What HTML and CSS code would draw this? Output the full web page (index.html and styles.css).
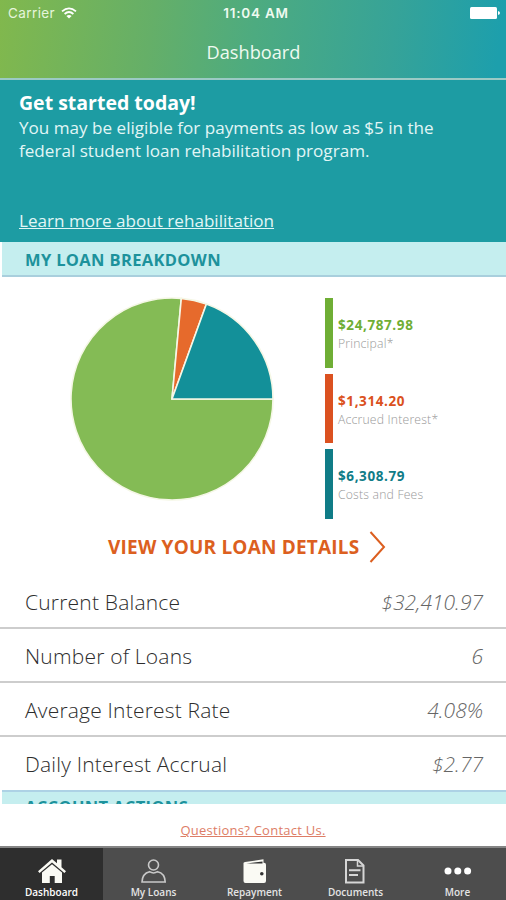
FILE: index.html
```html
<!DOCTYPE html>
<html lang="en">
<head>
<meta charset="UTF-8">
<title>Dashboard</title>
<link rel="stylesheet" href="styles.css">
</head>
<body>
<div class="app">
    <header class="header">
        <div class="status">
            <div class="carrier">
                <span>Carrier</span>
                <svg width="16" height="12" viewBox="0 0 16 12" fill="none" stroke="#fff" stroke-width="1.8">
                    <path d="M1 4.4Q8 -1.6 15 4.4"/>
                    <path d="M3.6 7Q8 3.1 12.4 7"/>
                    <path d="M8 11.6L5.4 8.9Q8 6.9 10.6 8.9Z" fill="#fff" stroke="none"/>
                </svg>
            </div>
            <div class="clock">11:04 AM</div>
            <svg class="battery" width="30" height="12" viewBox="0 0 30 12" fill="#fff">
                <rect width="27" height="12" rx="1.5"/>
                <path d="M28 4Q30 4.5 30 6T28 8Z"/>
            </svg>
        </div>
        <h1 class="title">Dashboard</h1>
    </header>

    <section class="promo">
        <h2>Get started today!</h2>
        <p>You may be eligible for payments as low as $5 in the<br>federal student loan rehabilitation program.</p>
        <a class="learn">Learn more about rehabilitation</a>
    </section>

    <main class="content">
        <h3 class="section_title">MY LOAN BREAKDOWN</h3>
        <div class="breakdown">
            <svg class="pie" width="204" height="204" viewBox="-102 -102 204 204" stroke="#f5f7e6" stroke-width="1.6">
                <path fill="#84bb55" d="M0 0H101A101 101 0 1 1 9.3 -100.6Z"/>
                <path fill="#e66a2c" d="M0 0L9.3 -100.6A101 101 0 0 1 34.4 -95Z"/>
                <path fill="#139099" d="M0 0L34.4 -95A101 101 0 0 1 101 0Z"/>
            </svg>
            <div class="legend">
                <div class="item principal"><b>$24,787.98</b><span>Principal*</span></div>
                <div class="item interest"><b>$1,314.20</b><span>Accrued Interest*</span></div>
                <div class="item fees"><b>$6,308.79</b><span>Costs and Fees</span></div>
            </div>
        </div>
        <a class="details">
            <span>VIEW YOUR LOAN DETAILS</span>
            <svg width="17" height="32" viewBox="0 0 17 32" fill="none" stroke="#dc5f20" stroke-width="2">
                <path d="M1.5 1L15 16L1.5 31"/>
            </svg>
        </a>
        <dl class="stats">
            <div class="row"><dt>Current Balance</dt><dd>$32,410.97</dd></div>
            <div class="row"><dt>Number of Loans</dt><dd>6</dd></div>
            <div class="row"><dt>Average Interest Rate</dt><dd>4.08%</dd></div>
            <div class="row"><dt>Daily Interest Accrual</dt><dd>$2.77</dd></div>
        </dl>
        <h3 class="section_title actions">ACCOUNT ACTIONS</h3>
    </main>

    <div class="contact"><a>Questions? Contact Us.</a></div>

    <nav class="tabs">
        <a class="tab active">
            <svg width="30" height="26" viewBox="0 0 30 26" fill="#fafaf4">
                <path d="M1 13.2L15 1L20 5.3V1.4H24.5V9.2L29 13.2L27.4 15L15 4.5L2.6 15Z"/>
                <path d="M5 14.6L15 6.2L25 14.6V25H17.7V18H12.8V25H5Z"/>
            </svg>
            <span>Dashboard</span>
        </a>
        <a class="tab">
            <svg width="30" height="26" viewBox="0 0 30 26" fill="none" stroke="#c9c9c9" stroke-width="1.6">
                <circle cx="14.5" cy="7" r="5"/>
                <path d="M3 24C3.2 17.5 7 14.5 10.5 13.7Q14.5 16.3 18.5 13.7C22.5 14.5 26 17.5 26.2 24Z"/>
            </svg>
            <span>My Loans</span>
        </a>
        <a class="tab">
            <svg width="30" height="26" viewBox="0 0 30 26">
                <path fill="#fafaf4" d="M3.5 5Q3.5 4.4 5 4.1L23.5 1.2V4.8H24Q26 4.8 26 6.8V23Q26 25 24 25H5.5Q3.5 25 3.5 23Z"/>
                <path d="M6.5 5.4L22.5 3.4V5.4Z" fill="#333"/>
                <circle cx="21.8" cy="15.8" r="1.8" fill="#333"/>
            </svg>
            <span>Repayment</span>
        </a>
        <a class="tab">
            <svg width="30" height="26" viewBox="0 0 30 26" fill="none" stroke="#d6d6d6" stroke-width="2">
                <path d="M5 2H17L22.5 7.5V24.5H5Z"/>
                <path d="M16.5 2V8H22.5" stroke-width="1.5"/>
                <path d="M8 12.3H19.5M8 17H17" stroke-width="2"/>
            </svg>
            <span>Documents</span>
        </a>
        <a class="tab">
            <svg width="30" height="26" viewBox="0 0 30 26" fill="#fff">
                <circle cx="5" cy="13" r="3.5"/>
                <circle cx="14.8" cy="13" r="3.5"/>
                <circle cx="24.6" cy="13" r="3.5"/>
            </svg>
            <span>More</span>
        </a>
    </nav>
</div>
</body>
</html>
```
FILE: styles.css
```css
* {
    box-sizing: border-box;
}

body {
    margin: 0;
    background: #fff;
    font-family: "Open Sans", "Noto Sans", sans-serif;
}

h1, h2, h3, p, dl, dt, dd {
    margin: 0;
}

svg {
    display: block;
    flex: none;
}

.app {
    display: flex;
    flex-direction: column;
    width: 506px;
    height: 900px;
    overflow: hidden;
}

.header {
    flex: none;
    height: 80px;
    color: #fff;
    background: linear-gradient(97deg, #81b84d 0%, #65af68 30%, #4dab80 50%, #36a398 77%, #1d9fac 98%);
    border-bottom: 2px solid #9bcac5;
}

.status {
    display: grid;
    grid-template-columns: 1fr auto 1fr;
    align-items: center;
    height: 26px;
    padding: 0 6px 0 8px;
    font-family: Inter, sans-serif;
    font-size: 13.5px;
}

.carrier {
    display: flex;
    align-items: center;
    gap: 6px;
    letter-spacing: 0.4px;
    color: #e6f5dc;
}

.clock {
    padding-left: 4px;
    font-weight: 600;
    color: #effaf0;
    letter-spacing: 0.8px;
}

.battery {
    justify-self: end;
}

.title {
    padding: 13px 0 0 1px;
    font-size: 18.2px;
    line-height: 27px;
    font-weight: 400;
    text-align: center;
    color: #effaf0;
}

.promo {
    flex: none;
    height: 162px;
    padding: 10px 19px 0;
    color: #e2f6f6;
    background: #1d9ca3;
}

.promo h2 {
    font-size: 19.5px;
    line-height: 26px;
    color: #fff;
}

.promo p {
    font-size: 17.1px;
    line-height: 23px;
}

.learn {
    display: block;
    width: max-content;
    margin-top: 47px;
    font-size: 17.1px;
    line-height: 23px;
    text-decoration: underline;
}

.content {
    flex: none;
    height: 562px;
    overflow: hidden;
}

.section_title {
    height: 35px;
    margin: 0 0 0 2px;
    padding-left: 23px;
    font-size: 16.5px;
    line-height: 35px;
    font-weight: 700;
    letter-spacing: 0.35px;
    color: #1d929c;
    background: #c5eeef;
    border-bottom: 2px solid #a9cfdd;
}

.breakdown {
    display: flex;
    gap: 51px;
    padding: 20px 0 0 70px;
}

.legend {
    display: flex;
    flex-direction: column;
    gap: 6px;
    padding-top: 1px;
}

.item {
    display: flex;
    flex-direction: column;
    height: 69.5px;
    padding: 18px 0 0 5px;
    border-left: 8px solid;
}

.item b {
    font-size: 13.5px;
    line-height: 19px;
    letter-spacing: 0.6px;
}

.item span {
    font-size: 12.2px;
    line-height: 18px;
    letter-spacing: 0.2px;
    font-weight: 300;
    color: #999;
}

.principal {
    color: #6fae35;
}

.interest {
    color: #db5120;
}

.fees {
    color: #107c87;
}

.details {
    display: flex;
    align-items: center;
    gap: 10px;
    height: 32px;
    margin: 12px 0 0 108px;
    font-size: 19px;
    line-height: 28px;
    letter-spacing: 0.2px;
    font-weight: 700;
    color: #dc5f20;
}

.details span {
    padding-top: 1px;
}

.stats {
    margin-top: 12px;
}

.row {
    display: flex;
    justify-content: space-between;
    align-items: center;
    height: 54px;
    padding: 3px 23px 0 25px;
    font-size: 21px;
    letter-spacing: 0.2px;
    font-weight: 300;
    color: #2d2d2d;
    border-bottom: 2px solid #cdcdcd;
}

.row dd {
    font-style: italic;
    letter-spacing: 0;
    color: #666;
}

.row:last-child {
    height: 53px;
    padding-top: 1px;
    border-bottom: 0;
}

.actions {
    line-height: 29px;
    border-top: 2px solid #add2e5;
}

.contact {
    display: flex;
    flex: none;
    justify-content: center;
    height: 42px;
    padding-top: 17px;
    font-size: 13px;
    line-height: 18px;
    letter-spacing: 0.25px;
    color: #dd7d66;
    text-decoration: underline;
}

.tabs {
    display: grid;
    flex: none;
    grid-template-columns: 103px 101px 101px 101px 100px;
    height: 54px;
    background: #4d4d4d;
    border-top: 2px solid #858585;
}

.tab {
    display: flex;
    flex-direction: column;
    align-items: center;
    padding-top: 10px;
    font-size: 10px;
    line-height: 14px;
    font-weight: 600;
    color: #e4e4e4;
}

.tab:last-child {
    padding-left: 3px;
}

.tab span {
    margin-top: 1px;
}

.active {
    color: #fff;
    background: #2e2e2e;
}
```
